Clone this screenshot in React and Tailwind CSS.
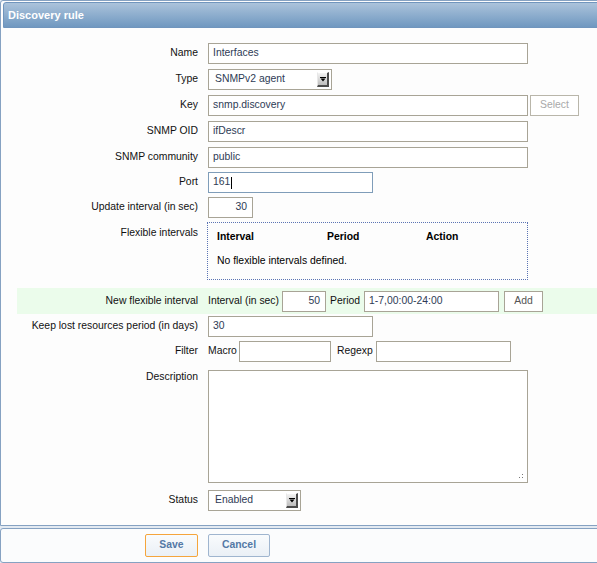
import React from "react";

function Arrow() {
  return (
    <div className="w-[12px] h-[15px] flex items-center justify-center bg-gradient-to-b from-[#f4f4f4] to-[#bdbdbd] border-t border-l border-t-[#ffffff] border-l-[#e8e8e8] border-r-[2px] border-b-[2px] border-r-[#4d4d4d] border-b-[#4d4d4d]">
      <svg width="6" height="5" viewBox="0 0 6 5">
        <rect x="0" y="0" width="6" height="1" fill="#000" />
        <path d="M0.5 1.5H5.5L3 4.5Z" fill="#000" />
      </svg>
    </div>
  );
}

function Input({ w, children, right = false, blue = false }) {
  return (
    <div
      className={
        "h-[21px] border bg-white flex items-center text-[#2e3b55] whitespace-nowrap " +
        (blue ? "border-[#7f9db9] " : "border-[#a8a496] ") +
        (right ? "justify-end pr-[5px] " : "pl-[4px] ")
      }
      style={{ width: w }}
    >
      {children}
    </div>
  );
}

function Select({ w, children }) {
  return (
    <div
      className="h-[21px] border border-[#a8a496] bg-white flex items-center justify-between pl-[6px] pr-[2px] text-[#2e3b55]"
      style={{ width: w }}
    >
      <span>{children}</span>
      <Arrow />
    </div>
  );
}

function Row({ label, children, className = "", top = false, labelPad = "pt-[5px]" }) {
  return (
    <div className={"flex " + (top ? "items-start " : "items-center ") + className}>
      <div className={"w-[197px] shrink-0 text-right text-[#111] " + (top ? labelPad : "")}>{label}</div>
      <div className="ml-[10px] flex items-center">{children}</div>
    </div>
  );
}

export default function App() {
  return (
    <div className="w-[597px] h-[563px] overflow-hidden bg-[#e3eaf2] font-['Liberation_Sans',Arial,sans-serif] text-[10.4px] leading-none">
      <div className="w-[640px] h-[526px] border border-[#86a2c2] rounded-tl-[3px] bg-[#fdfdfd]">
        <div className="mt-[1px] ml-[2px] h-[26px] border border-[#7095bd] rounded-tl-[3px] bg-gradient-to-b from-[#abc3db] to-[#7098c0] flex items-center pl-[4px]">
          <span className="text-white font-bold text-[11px]">Discovery rule</span>
        </div>

        <Row label="Name" className="mt-[15px]">
          <Input w={320}>Interfaces</Input>
        </Row>
        <Row label="Type" className="mt-[5px]">
          <Select w={124}>SNMPv2 agent</Select>
        </Row>
        <Row label="Key" className="mt-[5px]">
          <Input w={320}>snmp.discovery</Input>
          <div className="ml-[2px] w-[49px] h-[21px] border border-[#b9b6aa] bg-white flex items-center justify-center text-[#a9a9a9]">
            Select
          </div>
        </Row>
        <Row label="SNMP OID" className="mt-[5px]">
          <Input w={320}>ifDescr</Input>
        </Row>
        <Row label="SNMP community" className="mt-[5px]">
          <Input w={320}>public</Input>
        </Row>
        <Row label="Port" className="mt-[4px]">
          <Input w={165} blue>
            161<span className="inline-block w-[1px] h-[12px] bg-black ml-[1px]" />
          </Input>
        </Row>
        <Row label="Update interval (in sec)" className="mt-[4px]">
          <Input w={45} right>30</Input>
        </Row>
        <Row label="Flexible intervals" className="mt-[4px]" top labelPad="pt-[6px]">
          <div className="-ml-[1px] w-[321px] h-[58px] border border-dotted border-[#5b74b4] pl-[9px] pt-[9px]">
            <div className="flex font-bold text-black">
              <span className="w-[110px]">Interval</span>
              <span className="w-[99px]">Period</span>
              <span>Action</span>
            </div>
            <div className="mt-[14px] text-black">No flexible intervals defined.</div>
          </div>
        </Row>

        <div className="mt-[8px] ml-[16px] h-[26px] bg-[#ebfceb] flex items-center">
          <div className="w-[181px] shrink-0 text-right text-[#111]">New flexible interval</div>
          <div className="ml-[10px] flex items-center text-[#111]">
            <span>Interval (in sec)</span>
            <div className="ml-[3px]">
              <Input w={44} right>50</Input>
            </div>
            <span className="ml-[4px]">Period</span>
            <div className="ml-[4px]">
              <Input w={135}>1-7,00:00-24:00</Input>
            </div>
            <div className="ml-[5px] w-[39px] h-[21px] border border-[#a8a496] bg-white flex items-center justify-center text-[#555]">
              Add
            </div>
          </div>
        </div>

        <Row label="Keep lost resources period (in days)" className="mt-[2px]">
          <Input w={165}>30</Input>
        </Row>
        <Row label="Filter" className="mt-[4px]">
          <span className="text-[#111]">Macro</span>
          <div className="ml-[2px]">
            <Input w={92} />
          </div>
          <span className="ml-[6px] text-[#111]">Regexp</span>
          <div className="ml-[3px]">
            <Input w={135} />
          </div>
        </Row>
        <Row label="Description" className="mt-[8px]" top labelPad="pt-[2px]">
          <div className="relative w-[320px] h-[113px] border border-[#a8a496] bg-white">
            <svg className="absolute right-[3px] bottom-[3px]" width="6" height="6" viewBox="0 0 6 6">
              <rect x="4" y="1" width="1" height="1" fill="#777" />
              <rect x="1" y="4" width="1" height="1" fill="#777" />
              <rect x="4" y="4" width="1" height="1" fill="#777" />
            </svg>
          </div>
        </Row>
        <Row label="Status" className="mt-[7px]">
          <Select w={93}>Enabled</Select>
        </Row>
      </div>

      <div className="mt-[2px] w-[640px] h-[35px] border border-[#86a2c2] rounded-l-[3px] bg-[#fbfcfd] flex items-start pt-[5px]">
        <div className="ml-[144px] w-[53px] h-[23px] border border-[#f5a53c] rounded-[2px] bg-gradient-to-b from-[#f9fbfd] to-[#eaf0f6] flex items-center justify-center font-bold text-[#5479a6]">
          Save
        </div>
        <div className="ml-[10px] w-[62px] h-[23px] border border-[#9fb5cf] rounded-[2px] bg-gradient-to-b from-[#f9fbfd] to-[#eaf0f6] flex items-center justify-center font-bold text-[#5479a6]">
          Cancel
        </div>
      </div>
    </div>
  );
}
